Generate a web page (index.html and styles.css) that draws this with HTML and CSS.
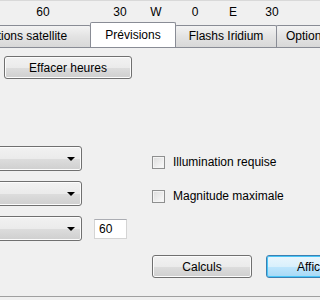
FILE: index.html
```html
<!DOCTYPE html>
<html lang="fr">
  <head>
    <meta charset="UTF-8" />
    <title>Prévisions</title>
    <link rel="stylesheet" href="styles.css">
  </head>
  <body>
    <div class="scale">
      <span class="tick t1">60</span>
      <span class="tick t2">30</span>
      <span class="tick t3">W</span>
      <span class="tick t4">0</span>
      <span class="tick t5">E</span>
      <span class="tick t6">30</span>
    </div>

    <div class="tabs">
      <div class="tab first">Informations satellite</div>
      <div class="tab active">Prévisions</div>
      <div class="tab">Flashs Iridium</div>
      <div class="tab last">Options</div>
    </div>

    <div class="panel">
      <button class="btn clear">Effacer heures</button>

      <div class="options">
        <div class="combos">
          <div class="combo"><span class="arrow"></span></div>
          <div class="combo"><span class="arrow"></span></div>
          <div class="combo-row">
            <div class="combo"><span class="arrow"></span></div>
            <input type="text" class="field" value="60" />
          </div>
        </div>
        <div class="checks">
          <label class="check"><span class="box"></span>Illumination requise</label>
          <label class="check"><span class="box"></span>Magnitude maximale</label>
        </div>
      </div>

      <div class="actions">
        <button class="btn calc">Calculs</button>
        <button class="btn default">Afficher</button>
      </div>
    </div>
  </body>
</html>
```

FILE: styles.css
```css
body {
  margin: 0;
  width: 320px;
  height: 300px;
  overflow: hidden;
  background: #f0f0f0;
  font-family: "Liberation Sans", Arial, sans-serif;
  font-size: 12px;
  color: #000;
}

/* scale above the tabs */
.scale {
  display: flex;
  height: 21px;
  border-top: 1px solid #d9d9d9;
  align-items: center;
}
.tick {
  width: 36px;
  text-align: center;
  flex-shrink: 0;
}
.t1 { margin-left: 25px; }
.t2 { margin-left: 41px; }
.t3 { margin-left: 0; }
.t4 { margin-left: 3px; }
.t5 { margin-left: 2px; }
.t6 { margin-left: 3px; }

/* tabs */
.tabs {
  display: flex;
  align-items: flex-end;
  height: 25px;
  white-space: nowrap;
}
.tab {
  height: 21px;
  line-height: 21px;
  padding: 0 9px;
  border: 1px solid #898c95;
  border-bottom: none;
  margin-left: -1px;
  background: linear-gradient(#f3f3f3, #e3e3e3 50%, #d8d8d8);
  border-radius: 2px 2px 0 0;
  flex-shrink: 0;
}
.tab.first {
  margin-left: -52px;
  width: 125px;
  padding: 0 8px;
}
.tab.active {
  height: 24px;
  line-height: 24px;
  background: #fff;
  width: 66px;
  text-align: center;
  position: relative;
  z-index: 1;
}
.tab:nth-child(3) {
  width: 82px;
  text-align: center;
}
.tab.last {
  width: 70px;
}

.panel {
  border-top: 1px solid #898c95;
  border-bottom: 1px solid #a0a0a0;
  height: 240px;
  padding-top: 8px;
}

/* buttons */
.btn {
  font: inherit;
  color: #000;
  height: 23px;
  border: 1px solid #707070;
  border-radius: 3px;
  background: linear-gradient(#f2f2f2, #ebebeb 50%, #dddddd 51%, #cfcfcf);
  box-shadow: inset 0 0 0 1px #fcfcfc;
  padding: 0;
  flex-shrink: 0;
}
.clear {
  display: block;
  width: 128px;
  margin-left: 4px;
}

/* combos + checkboxes */
.options {
  display: flex;
  margin-top: 67px;
}
.combos {
  display: flex;
  flex-direction: column;
  gap: 10px;
  margin-left: -20px;
}
.combo {
  width: 100px;
  height: 23px;
  border: 1px solid #707070;
  border-radius: 3px;
  background: linear-gradient(#f2f2f2, #ebebeb 50%, #dddddd 51%, #cfcfcf);
  box-shadow: inset 0 0 0 1px #fcfcfc;
  position: relative;
}
.arrow {
  position: absolute;
  right: 6px;
  top: 10px;
  border-left: 4px solid transparent;
  border-right: 4px solid transparent;
  border-top: 4px solid #000;
}
.combo-row {
  display: flex;
  align-items: center;
  gap: 12px;
}
.field {
  font: inherit;
  width: 27px;
  height: 18px;
  padding: 0 0 0 4px;
  border: 1px solid #d4d4d4;
  border-top-color: #abadb3;
  background: #fff;
}

.checks {
  display: flex;
  flex-direction: column;
  gap: 20px;
  margin-left: 25px;
  padding-top: 9px;
}
.check {
  display: flex;
  align-items: center;
  gap: 8px;
  height: 14px;
}
.box {
  width: 11px;
  height: 11px;
  border: 1px solid #8e8f8f;
  background: linear-gradient(135deg, #dcdcdc, #fbfbfb);
  box-shadow: inset 0 0 0 1px #f4f4f4;
}

/* bottom actions */
.actions {
  display: flex;
  gap: 14px;
  margin-top: 14px;
  margin-left: 152px;
}
.calc {
  width: 100px;
}
.default {
  width: 100px;
  border-color: #3c7fb1;
  background: linear-gradient(#eaf6fd, #d9f0fc 50%, #bee6fd 51%, #a7d9f5);
  box-shadow: inset 0 0 0 1px #48c6f8;
  text-align: left;
  padding-left: 30px;
}
```
